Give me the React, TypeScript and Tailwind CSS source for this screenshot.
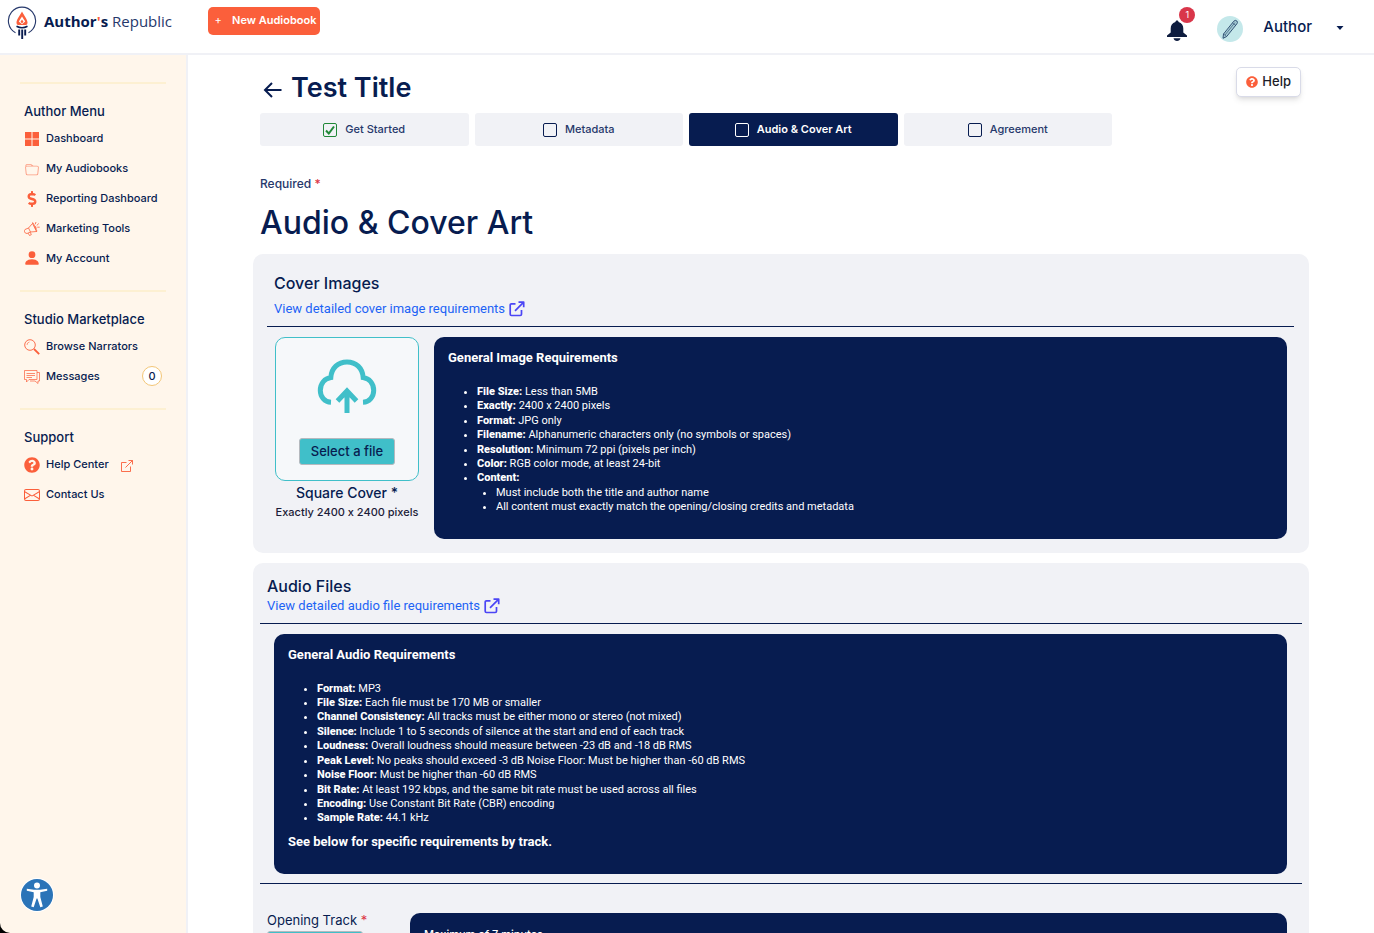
import type { ReactNode } from 'react';
import { BsEnvelope, BsFolder, BsPersonFill } from 'react-icons/bs';
import { FaDollarSign, FaQuestionCircle } from 'react-icons/fa';

const orange = 'text-[#fb5f3b]';

function Logo() {
  return (
    <svg width="30" height="34" viewBox="0 0 30 34" fill="none" aria-hidden="true">
      <path d="M8.500 26.700A13.600 13.600 0 1 1 21.500 26.700" stroke="#26386b" strokeWidth="1.100" />
      <path d="M15 5.500C16 8 20.500 13 20.500 16.500C20.500 18 19.800 18.600 19 19H11C10.200 18.600 9.500 18 9.500 16.500C9.500 13 14 8 15 5.500Z" fill="#fb5f3b" />
      <path d="M15 10.500L18.200 15.500L15 18.200L11.800 15.500Z" fill="#fff" />
      <path d="M15 13.500L16.500 15.800L15 17.500L13.500 15.800Z" fill="#fb5f3b" />
      <path d="M9.500 20.300Q15 23.200 20.500 20.300" stroke="#0a1d50" strokeWidth="1.600" />
      <path d="M12.200 23.500V29.500M15.200 23.500V33M18.200 23.500V29.500" stroke="#0a1d50" strokeWidth="1.900" />
    </svg>
  );
}

function BellIcon() {
  return (
    <svg width="20" height="22" viewBox="0 0 20 22" fill="#0d1b3e" aria-hidden="true">
      <path d="M10 0.500C11 0.500 11.500 1.200 11.600 2C14.800 2.800 16.300 5.500 16.300 8.500V12.500L20 15.500V17H0V15.500L3.700 12.500V8.500C3.700 5.500 5.200 2.800 8.400 2C8.500 1.200 9 0.500 10 0.500Z" />
      <path d="M6.500 18.200H13.500C13 20 11.800 21 10 21S7 20 6.500 18.200Z" />
    </svg>
  );
}

function PencilIcon() {
  return (
    <svg width="26" height="26" viewBox="0 0 26 26" fill="none" aria-hidden="true">
      <circle cx="13" cy="13" r="13" fill="#c4e8ea" />
      <path d="M6.500 18L16.800 5.200Q18.300 3.600 19.900 5Q21 6.300 19.900 7.800L9.700 20.500L6 22.300Z" fill="#a5cdd5" stroke="#26456b" strokeWidth="0.900" strokeLinejoin="round" />
      <path d="M8 19L18 6.500M15.500 7L18.800 9.400M6.500 18L9.700 20.500" stroke="#26456b" strokeWidth="0.600" />
    </svg>
  );
}

function GridIcon() {
  return (
    <svg width="16" height="16" viewBox="0 0 16 16" fill="currentColor" aria-hidden="true">
      <path d="M1 1H7.500V7.500H1ZM8.500 1H15V7.500H8.500ZM1 8.500H7.500V15H1ZM8.500 8.500H15V15H8.500Z" />
    </svg>
  );
}

function MegaphoneIcon() {
  return (
    <svg width="16" height="16" viewBox="0 0 16 16" fill="none" stroke="currentColor" strokeWidth="0.800" strokeLinejoin="round" aria-hidden="true">
      <path d="M1 8.500L4.500 7L8.500 2.500L12.500 10.500L6.500 11L3 12.500Q1 12.500 0.500 10.800Q0.300 9.300 1 8.500ZM4.500 7L6.500 11M8 2.200L9 1.800L13 10.200L12.200 10.700M4.200 12.200L5.500 14.500L7.300 13.700L6.300 11.200M10.500 5Q12.500 5.300 12 8" />
      <path d="M11.200 3.300L12 1M12.700 4.500L14.800 2.500M13.300 6.200H15.700" />
    </svg>
  );
}

function SearchIcon() {
  return (
    <svg width="16" height="16" viewBox="0 0 16 16" fill="none" stroke="currentColor" aria-hidden="true">
      <circle cx="6" cy="6" r="5.300" strokeWidth="0.900" />
      <path d="M3 6A3 3 0 0 1 5.500 3" strokeWidth="0.600" />
      <path d="M10 10L15.200 15.200" strokeWidth="1.800" />
    </svg>
  );
}

function MessagesIcon() {
  return (
    <svg width="16" height="16" viewBox="0 0 16 16" fill="none" stroke="currentColor" strokeWidth="0.700" aria-hidden="true">
      <path d="M0.500 1.500H13V10.500H5L2.500 13V10.500H0.500Z" />
      <path d="M13 3.500H15.500V12H14V14.500L11 12H6M2.500 4.500H11M2.500 6.500H11M2.500 8.500H8" />
    </svg>
  );
}

function ExternalIcon() {
  return (
    <svg width="16" height="16" viewBox="0 0 16 16" fill="none" stroke="currentColor" strokeWidth="1.700" strokeLinejoin="round" aria-hidden="true">
      <path d="M6.500 2.800H2.500Q1.200 2.800 1.200 4.100V13.200Q1.200 14.500 2.500 14.500H11.200Q12.500 14.500 12.500 13.200V9" />
      <path d="M9.500 1.200H14.700V6.200M14.700 1.200L6 9.900" />
    </svg>
  );
}

function OpenIcon() {
  return (
    <svg width="12" height="12" viewBox="0 0 12 12" fill="none" stroke="currentColor" strokeWidth="0.900" aria-hidden="true">
      <path d="M5.500 2.500H0.500V11.500H9.500V6.500" />
      <path d="M7.500 0.500H11.500V4.500M11.500 0.500L4.500 7.500" />
    </svg>
  );
}

function CloudUploadIcon() {
  return (
    <svg width="60" height="56" viewBox="0 0 60 56" fill="none" stroke="#40bfc9" strokeWidth="5" aria-hidden="true">
      <path d="M14 43.300C7.500 43 3.300 37.500 3.300 31.500C3.300 24 8 19.500 13.800 18.500C14.500 9 21 3 30 3S45.500 9 46.200 18.500C52 19.500 56.700 24 56.700 31.500C56.700 37.500 52.500 43 46 43.300" />
      <path d="M30 54V31.500M20.500 42L30 32L39.500 42" />
    </svg>
  );
}

function MenuItem({ icon, label, children }: { icon: ReactNode; label: string; children?: ReactNode }) {
  return (
    <li className="flex h-[30px] items-center">
      <a href="#" className="flex items-center gap-[6px] whitespace-nowrap">
        <span className={`flex h-[18px] w-4 items-end justify-center ${orange}`}>{icon}</span>
        <span>{label}</span>
      </a>
      {children}
    </li>
  );
}

function MenuGroup({ title, children }: { title: string; children: ReactNode }) {
  return (
    <section className="border-t-2 border-[#fdf0d2] pt-[19px] pb-[17px]">
      <h2 className="pl-1 text-[13px] leading-[16px] font-medium">{title}</h2>
      <ul className="pt-1 pl-1 text-[11px] font-medium">{children}</ul>
    </section>
  );
}

function Step({ label, done = false, active = false }: { label: string; done?: boolean; active?: boolean }) {
  return (
    <label
      className={`flex h-[33px] items-center justify-center gap-2 rounded-[3px] text-[11px] ${
        active ? 'bg-[#071c50] font-semibold text-white' : 'bg-[#f1f2f6] font-medium text-[#26386b]'
      }`}
    >
      <span className="grid size-[14px] place-items-center">
        <input
          type="checkbox"
          defaultChecked={done}
          className={`col-start-1 row-start-1 size-[14px] appearance-none rounded-[2px] border ${
            done ? 'border-[#218838]' : active ? 'border-white' : 'border-[#071c50]'
          }`}
        />
        {done && (
          <svg className="pointer-events-none col-start-1 row-start-1" width="10" height="10" viewBox="0 0 10 10" fill="none" stroke="#218838" strokeWidth="2" aria-hidden="true">
            <path d="M1 5.500L3.800 8.500L9 1.500" />
          </svg>
        )}
      </span>
      {label}
    </label>
  );
}

function RequirementsLink({ children }: { children: ReactNode }) {
  return (
    <a href="#" className="inline-flex items-center gap-1 font-[Roboto,sans-serif] text-[13px] leading-[18px] text-[#1d63f5]">
      {children}
      <span className="text-[#4b45f5]">
        <ExternalIcon />
      </span>
    </a>
  );
}

function SelectFileButton() {
  return (
    <button className="h-[27px] w-24 rounded-[3px] border border-[#b5b9be] bg-[#40bfc9] text-[13px] font-medium">
      Select a file
    </button>
  );
}

const imageRules: [string, string][] = [
  ['File Size:', 'Less than 5MB'],
  ['Exactly:', '2400 x 2400 pixels'],
  ['Format:', 'JPG only'],
  ['Filename:', 'Alphanumeric characters only (no symbols or spaces)'],
  ['Resolution:', 'Minimum 72 ppi (pixels per inch)'],
  ['Color:', 'RGB color mode, at least 24-bit'],
];

const audioRules: [string, string][] = [
  ['Format:', 'MP3'],
  ['File Size:', 'Each file must be 170 MB or smaller'],
  ['Channel Consistency:', 'All tracks must be either mono or stereo (not mixed)'],
  ['Silence:', 'Include 1 to 5 seconds of silence at the start and end of each track'],
  ['Loudness:', 'Overall loudness should measure between -23 dB and -18 dB RMS'],
  ['Peak Level:', 'No peaks should exceed -3 dB Noise Floor: Must be higher than -60 dB RMS'],
  ['Noise Floor:', 'Must be higher than -60 dB RMS'],
  ['Bit Rate:', 'At least 192 kbps, and the same bit rate must be used across all files'],
  ['Encoding:', 'Use Constant Bit Rate (CBR) encoding'],
  ['Sample Rate:', '44.1 kHz'],
];

function Rules({ rules, children }: { rules: [string, string][]; children?: ReactNode }) {
  return (
    <ul className="list-disc pt-[19px] pl-[29px] text-[11px] leading-[1.31]">
      {rules.map(([name, text]) => (
        <li key={name}>
          <strong className="font-extrabold">{name}</strong> {text}
        </li>
      ))}
      {children}
    </ul>
  );
}

export default function App() {
  return (
    <div className="flex h-screen flex-col overflow-hidden bg-white font-[Inter,sans-serif] text-[#071c50]">
      <header className="flex h-[55px] shrink-0 items-center justify-between border-b-2 border-[#f0f1f6] pr-[30px] pl-[7px]">
        <div className="flex items-center gap-9 pb-3">
          <a href="#" className="flex items-center gap-[7px] pt-1 font-['Open_Sans',sans-serif] text-[15px] whitespace-nowrap">
            <Logo />
            <span className="pb-[2px] text-[#26386b]">
              <b className="font-bold text-[#071c50]">
                Author<span className={orange}>'</span>s
              </b>{' '}
              Republic
            </span>
          </a>
          <button className="flex h-7 items-center gap-[10px] rounded-[5px] bg-[#fb5f3b] pr-1 pl-[6px] text-[11px] font-semibold whitespace-nowrap text-white">
            <span className="w-2 font-normal">+</span>
            New Audiobook
          </button>
        </div>
        <div className="flex items-center pt-[2px]">
          <button aria-label="Notifications" className="relative pt-[6px]">
            <BellIcon />
            <span className="absolute -top-[7px] left-3 grid size-4 place-items-center rounded-full bg-[#d9364a] text-[9px] leading-none text-white">1</span>
          </button>
          <span className="pt-[2px] pl-[30px]">
            <PencilIcon />
          </span>
          <button className="flex items-center gap-6 pl-5 text-[15px] font-medium">
            Author
            <svg width="8" height="4" viewBox="0 0 8 4" fill="currentColor" aria-hidden="true">
              <path d="M0.500 0H7.500L4 4Z" />
            </svg>
          </button>
        </div>
      </header>

      <div className="flex min-h-0 flex-1">
        <div className="flex w-[188px] shrink-0 bg-black">
          <nav className="w-full rounded-bl-[10px] border-r-2 border-[#f0f1f6] bg-[#fff6eb] pt-[27px] pr-5 pl-5">
            <MenuGroup title="Author Menu">
              <MenuItem icon={<GridIcon />} label="Dashboard" />
              <MenuItem icon={<BsFolder size={14} className="opacity-60" />} label="My Audiobooks" />
              <MenuItem icon={<FaDollarSign size={16} />} label="Reporting Dashboard" />
              <MenuItem icon={<MegaphoneIcon />} label="Marketing Tools" />
              <MenuItem icon={<BsPersonFill size={18} className="shrink-0" />} label="My Account" />
            </MenuGroup>
            <MenuGroup title="Studio Marketplace">
              <MenuItem icon={<SearchIcon />} label="Browse Narrators" />
              <MenuItem icon={<MessagesIcon />} label="Messages">
                <span className="mr-1 ml-auto grid size-5 place-items-center rounded-full border border-[#f3c677] bg-white">0</span>
              </MenuItem>
            </MenuGroup>
            <MenuGroup title="Support">
              <MenuItem icon={<FaQuestionCircle size={16} />} label="Help Center">
                <span className={`pt-[3px] pl-3 ${orange}`}>
                  <OpenIcon />
                </span>
              </MenuItem>
              <MenuItem icon={<BsEnvelope size={16} />} label="Contact Us" />
            </MenuGroup>
          </nav>
        </div>

        <main className="min-w-0 flex-1 overflow-y-auto px-[65px] pt-3 [scrollbar-width:none]">
          <div className="flex items-start justify-between pr-2 pl-[10px]">
            <div className="flex items-center gap-2 pt-[3px]">
              <a href="#" aria-label="Back" className="pt-1">
                <svg width="20" height="16" viewBox="0 0 20 16" fill="none" stroke="currentColor" strokeWidth="2" aria-hidden="true">
                  <path d="M18.500 8H2.500M9 1L2 8L9 15" />
                </svg>
              </a>
              <p className="text-[27px] leading-[36px] font-semibold">Test Title</p>
            </div>
            <button className="flex h-[30px] items-center gap-1 rounded-[5px] border border-[#d9dbe8] bg-white px-[9px] text-[13px] font-medium text-[#1c1c28] shadow-md">
              <FaQuestionCircle size={12} className={orange} />
              Help
            </button>
          </div>

          <div className="grid max-w-[866px] grid-cols-4 gap-[6px] px-[7px] pt-[7px]">
            <Step label="Get Started" done />
            <Step label="Metadata" />
            <Step label="Audio & Cover Art" active />
            <Step label="Agreement" />
          </div>

          <p className="px-[7px] pt-[30px] text-[12px] leading-[16px] font-medium text-[#26386b]">
            Required <span className="text-[#dc3545]">*</span>
          </p>
          <h1 className="px-[7px] pt-[11px] text-[32px] leading-[40px] font-medium">Audio &amp; Cover Art</h1>

          <section className="mt-[11px] rounded-[10px] bg-[#f1f2f6] pt-[19px] pb-[14px]">
            <div className="mr-[15px] ml-[14px] border-b border-[#071c50] pb-2 pl-[7px]">
              <h2 className="text-[16px] leading-[20px] font-medium">Cover Images</h2>
              <div className="flex pt-[7px]">
                <RequirementsLink>View detailed cover image requirements</RequirementsLink>
              </div>
            </div>
            <div className="flex gap-[15px] pt-[10px] pr-[22px] pl-[22px]">
              <div className="flex w-36 shrink-0 flex-col items-center whitespace-nowrap">
                <div className="flex h-36 w-full flex-col items-center justify-between rounded-[10px] border border-[#40bfc9] bg-[#f6f8fa] pt-[21px] pb-[15px]">
                  <CloudUploadIcon />
                  <SelectFileButton />
                </div>
                <p className="pt-[3px] text-[14px] leading-[18px] font-medium">Square Cover *</p>
                <p className="pt-[2px] text-[11px] leading-[16px] font-medium text-[#1c1c38] [font-feature-settings:'calt'_0]">
                  Exactly 2400 x 2400 pixels
                </p>
              </div>
              <div className="min-w-0 flex-1 rounded-[10px] bg-[#071c50] px-[14px] pt-[13px] pb-6 font-[Roboto,sans-serif] text-white">
                <h3 className="text-[13px] leading-[16px] font-bold">General Image Requirements</h3>
                <Rules rules={imageRules}>
                  <li>
                    <strong className="font-extrabold">Content:</strong>
                    <ul className="list-disc pl-[19px]">
                      <li>Must include both the title and author name</li>
                      <li>All content must exactly match the opening/closing credits and metadata</li>
                    </ul>
                  </li>
                </Rules>
              </div>
            </div>
          </section>

          <section className="mt-[10px] rounded-[10px] bg-[#f1f2f6] px-[7px] pt-[13px] pb-6">
            <div className="border-b border-[#071c50] pb-2 pl-[7px]">
              <h2 className="text-[16px] leading-[20px] font-medium">Audio Files</h2>
              <div className="flex pt-[1px]">
                <RequirementsLink>View detailed audio file requirements</RequirementsLink>
              </div>
            </div>
            <div className="border-b border-[#071c50] pt-[10px] pr-[15px] pb-[9px] pl-[14px]">
              <div className="rounded-[10px] bg-[#071c50] px-[14px] pt-[13px] pb-6 font-[Roboto,sans-serif] text-white">
                <h3 className="text-[13px] leading-[16px] font-bold">General Audio Requirements</h3>
                <Rules rules={audioRules} />
                <p className="pt-2 text-[13px] leading-[16px] font-bold">See below for specific requirements by track.</p>
              </div>
            </div>
            <div className="flex pt-[29px] pr-[15px] pl-[7px]">
              <div className="w-[143px] shrink-0">
                <p className="pb-[3px] text-[13px] leading-[15px]">
                  Opening Track <span className="text-[#dc3545]">*</span>
                </p>
                <SelectFileButton />
              </div>
              <div className="min-h-[120px] flex-1 rounded-[10px] bg-[#071c50] px-[14px] pt-3 text-[11px] leading-[18px] font-medium text-white">
                Maximum of 7 minutes
              </div>
            </div>
          </section>
        </main>
      </div>

      <button aria-label="Accessibility options" className="fixed bottom-[21px] left-5 rounded-full">
        <svg width="34" height="34" viewBox="0 0 34 34" aria-hidden="true">
          <circle cx="17" cy="17" r="17" fill="#fff" />
          <circle cx="17" cy="17" r="16" fill="#2b74b8" />
          <circle cx="17" cy="7.500" r="3" fill="#fff" />
          <path d="M6.800 10.800L14 11.800H20L27.200 10.800V12.800L20.300 14.200V19L22.800 28.500L20.300 29.200L17.400 20.500H16.600L13.700 29.200L11.200 28.500L13.700 19V14.200L6.800 12.800Z" fill="#fff" />
        </svg>
      </button>
    </div>
  );
}
